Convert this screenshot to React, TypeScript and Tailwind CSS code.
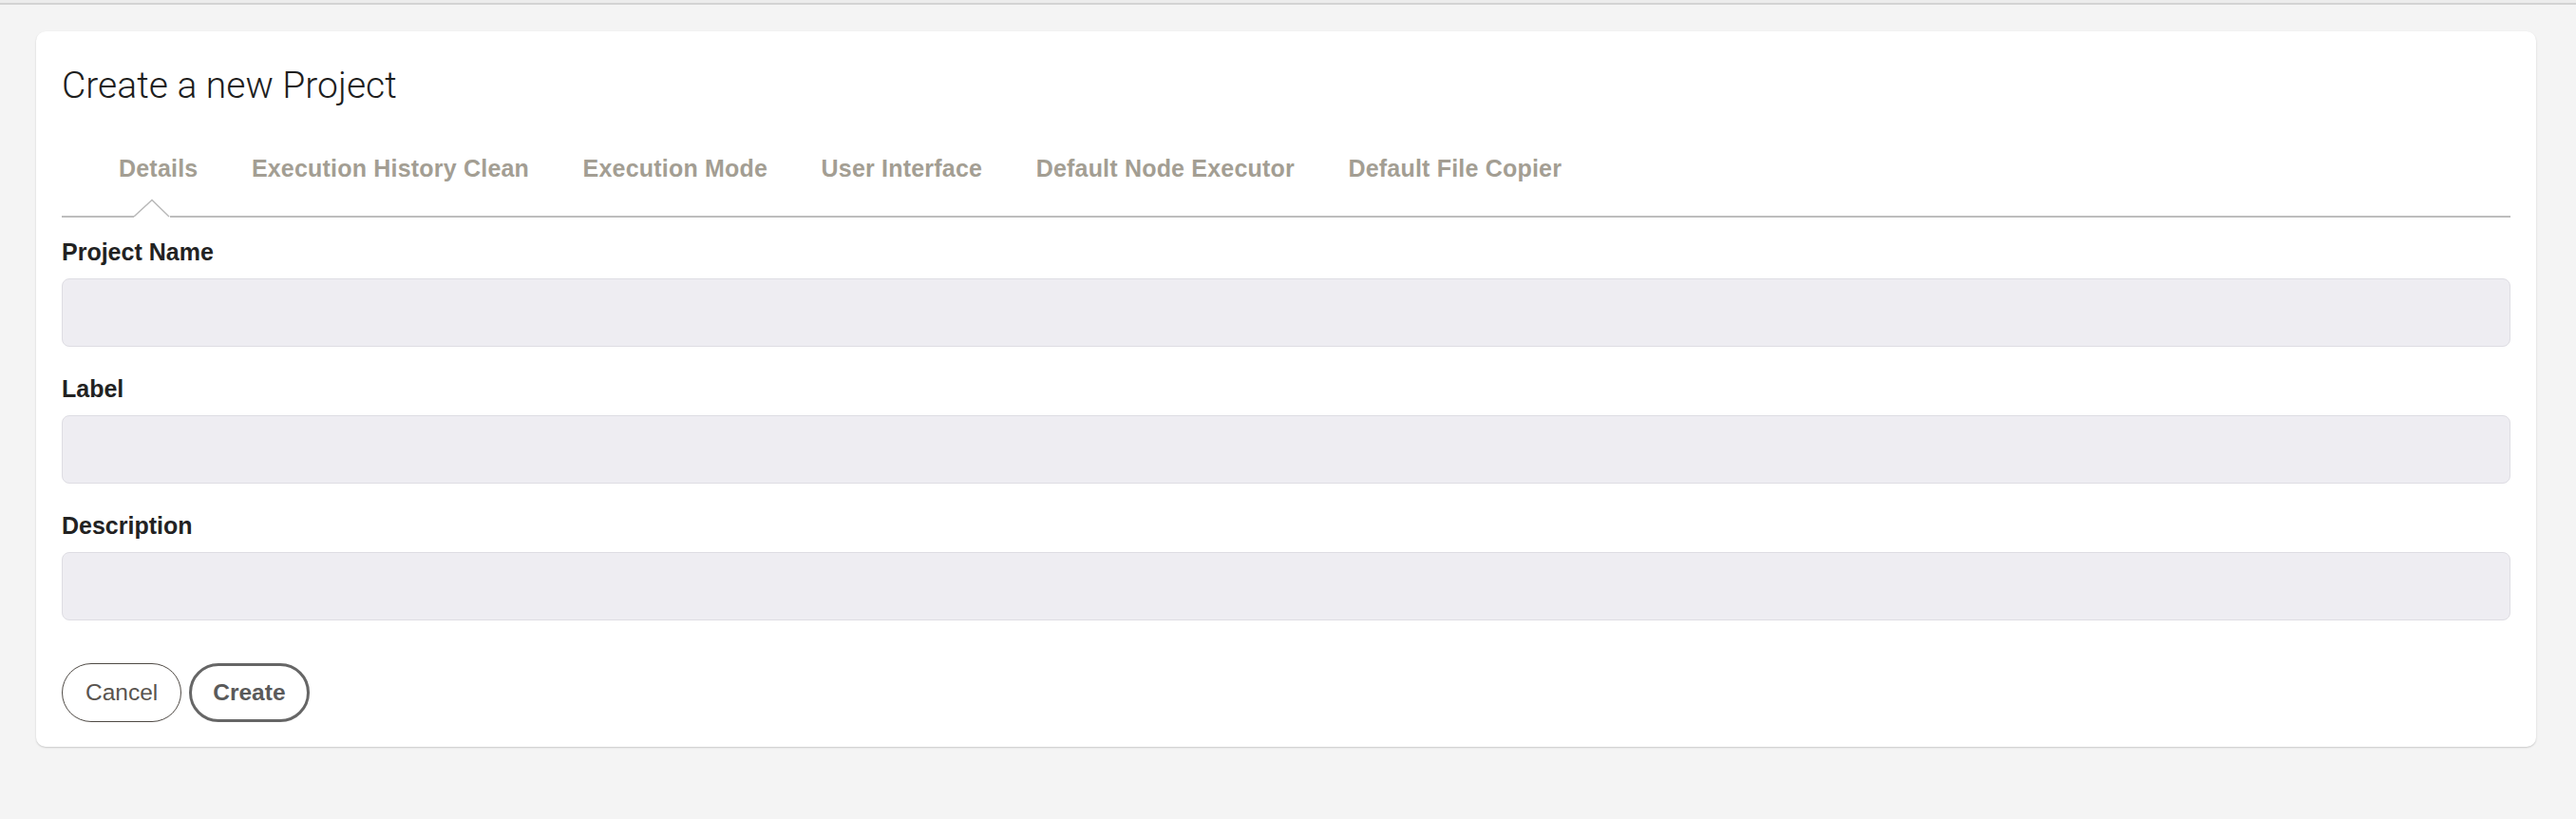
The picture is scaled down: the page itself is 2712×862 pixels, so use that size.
import React from 'react'

const tabs = [
  'Details',
  'Execution History Clean',
  'Execution Mode',
  'User Interface',
  'Default Node Executor',
  'Default File Copier',
]

const fields = ['Project Name', 'Label', 'Description']

function Field({ label }: { label: string }) {
  return (
    <div className="flex flex-col">
      <label className="text-[25px] leading-[28px] font-bold text-[#222222]">{label}</label>
      <div className="mt-[14px] h-[72px] rounded-[8px] border border-[#dedde3] bg-[#eeedf2]" />
    </div>
  )
}

export default function App() {
  return (
    <div className="min-h-screen bg-[#f4f4f4] font-['Liberation_Sans',Arial,sans-serif]">
      <div className="h-[3px] bg-[#ececec]" />
      <div className="h-[2px] bg-[#d3d3d3]" />
      <div className="pl-[38px] pr-[42px] pt-[28px]">
        <div className="rounded-[10px] bg-white px-[27px] pt-[35px] pb-[26px] shadow-[0_1px_2px_rgba(0,0,0,0.18)]">
          <h1 className="font-['Roboto',sans-serif] text-[39px] leading-[44px] font-light text-[#1e1e1e]">
            Create a new Project
          </h1>

          {/* tabs */}
          <div className="mt-[51px] flex gap-[56.5px] border-b-2 border-[#bdbdbd] pl-[60px]">
            {tabs.map((t, i) => (
              <div
                key={t}
                className="relative pb-[36px] text-[25px] leading-[28px] font-bold tracking-[0.2px] text-[#a39e93]"
              >
                {t}
                {i === 0 && (
                  <svg
                    className="absolute left-[16px] bottom-[-2px]"
                    width="38"
                    height="20"
                    viewBox="0 0 38 20"
                  >
                    <polygon points="0,19 19,1 37,19" fill="white" stroke="white" strokeWidth="2" />
                    <polyline points="0,19 19,1.5 37,19" fill="none" stroke="#b8b8b8" strokeWidth="1.4" />
                  </svg>
                )}
              </div>
            ))}
          </div>

          <div className="mt-[22px] flex flex-col gap-[30px]">
            {fields.map((f) => (
              <Field key={f} label={f} />
            ))}
          </div>

          <div className="mt-[45px] flex gap-[8px]">
            <button className="h-[62px] rounded-full border-[1.5px] border-[#4f4a45] px-[24px] text-[24.5px] text-[#59544f]">
              Cancel
            </button>
            <button className="h-[62px] rounded-full border-[3px] border-[#666666] px-[22px] text-[24.5px] font-bold text-[#5a5a5a]">
              Create
            </button>
          </div>
        </div>
      </div>
    </div>
  )
}
